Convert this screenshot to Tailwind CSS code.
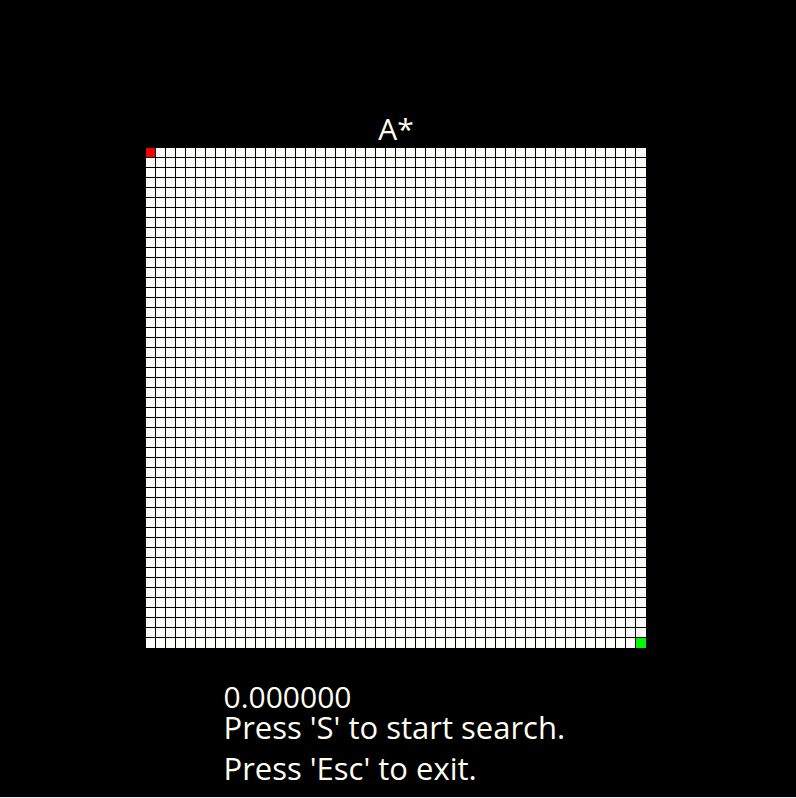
<!DOCTYPE html>
<html lang="en">
<head>
<meta charset="utf-8">
<meta name="viewport" content="width=device-width, initial-scale=1">
<title>A* search</title>
<script src="https://cdn.jsdelivr.net/npm/@tailwindcss/browser@4"></script>
</head>
<body class="flex min-h-screen flex-col items-center border-b border-[#eeeaff] bg-black pt-[109px] font-['Open_Sans',sans-serif] text-[30px] leading-[30px] text-[#fffff0]">
  <main class="flex flex-col items-center pr-1">
    <h1 class="pt-[5px] pb-1">A*</h1>
    <svg class="block" width="500" height="500" viewBox="0 0 500 500" shape-rendering="crispEdges" role="img" aria-label="Search grid with start and goal cells">
      <defs>
        <pattern id="columns" width="10" height="10" patternUnits="userSpaceOnUse">
          <rect x="9" width="1" height="10" fill="#040400"/>
        </pattern>
        <pattern id="rows" width="10" height="10" patternUnits="userSpaceOnUse">
          <rect y="9" width="10" height="1" fill="#040400"/>
        </pattern>
      </defs>
      <rect width="500" height="500" fill="#fdfdfb"/>
      <rect width="499" height="500" fill="url(#columns)"/>
      <rect width="500" height="499" fill="url(#rows)"/>
      <rect width="9" height="9" fill="#f40000"/>
      <rect x="490" y="490" width="10" height="10" fill="#00f800"/>
    </svg>
    <div class="w-[345px] pt-[34px]">
      <p>0.000000</p>
      <div class="text-[31px] leading-[30px]">
        <p>Press 'S' to start search.</p>
        <p class="pt-[11px]">Press 'Esc' to exit.</p>
      </div>
    </div>
  </main>
</body>
</html>
